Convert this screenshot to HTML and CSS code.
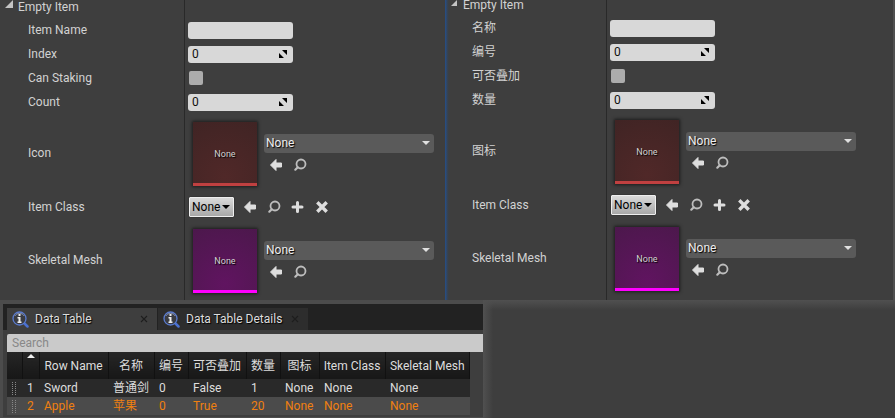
FILE: index.html
```html
<!DOCTYPE html>
<html lang="zh-CN">
<head>
<meta charset="utf-8">
<title>Data Table</title>
<link rel="stylesheet" href="styles.css">
</head>
<body>
<svg class="defs" aria-hidden="true">
  <symbol id="back" viewBox="0 0 16 16"><path d="M2.500 8 8 2.500v3.500h5.500v4H8v3.500z" fill="#dedede" stroke="#dedede" stroke-linejoin="round"/></symbol>
  <symbol id="find" viewBox="0 0 16 16"><circle cx="9" cy="7" r="4.500" fill="none" stroke="#bdbdbd" stroke-width="1.800"/><path d="M5.800 10.200 3.300 12.700" stroke="#bdbdbd" stroke-width="2.200" stroke-linecap="round"/></symbol>
  <symbol id="add" viewBox="0 0 16 16"><path d="M7.500 3.500v9M3 8h9" stroke="#dedede" stroke-width="3" stroke-linecap="round"/></symbol>
  <symbol id="clear" viewBox="0 0 16 16"><path d="m4.500 4.500 7 7m0-7-7 7" stroke="#dedede" stroke-width="3.400" stroke-linecap="square"/></symbol>
  <symbol id="spin" viewBox="0 0 8 8"><path d="M3 0h5v5zM0 3v5h5z" fill="#000"/></symbol>
  <symbol id="caret" viewBox="0 0 8 4"><path d="M0 0h8L4 4z" fill="currentColor"/></symbol>
  <symbol id="open" viewBox="0 0 8 8"><path d="M8 0v8H0z" fill="#c4c4c4"/></symbol>
  <symbol id="cross" viewBox="0 0 8 8"><path d="m1 1 6 6m0-6-6 6" stroke="#1e1e1e" stroke-width="1.100"/></symbol>
  <symbol id="info" viewBox="0 0 17 17">
    <path d="m12 12 3.500 3.500" stroke="#4a70d0" stroke-width="2.500" stroke-linecap="round"/>
    <circle cx="7.500" cy="7.500" r="6.500" fill="#3a3c42" stroke="#5a7bcf" stroke-width="1.300"/>
    <path d="M2.800 5a5.500 5.500 0 0 1 9.400 0" fill="none" stroke="#8792ad"/>
    <path d="M6.500 3h2v2h-2zM5.500 6h3v4.500h1V12h-4v-1.500h1v-3h-1z" fill="#eee"/>
  </symbol>
</svg>

<main class="details">
  <section class="panel panel-en">
    <h2><svg class="open"><use href="#open"/></svg>Empty Item</h2>
    <div class="row"><label for="a-name">Item Name</label><div class="value"><input class="field" id="a-name" type="text"></div></div>
    <div class="row"><label for="a-index">Index</label><div class="value"><span class="spin"><input class="field" id="a-index" type="text" value="0"><svg><use href="#spin"/></svg></span></div></div>
    <div class="row"><label for="a-stack">Can Staking</label><div class="value"><input class="check" id="a-stack" type="checkbox"></div></div>
    <div class="row"><label for="a-count">Count</label><div class="value"><span class="spin"><input class="field" id="a-count" type="text" value="0"><svg><use href="#spin"/></svg></span></div></div>
    <div class="row asset"><label for="a-icon">Icon</label><div class="value">
      <div class="thumb texture">None</div>
      <div class="picker"><span class="combo"><select id="a-icon"><option>None</option></select><svg><use href="#caret"/></svg></span>
        <div class="tools"><button aria-label="Use selected"><svg><use href="#back"/></svg></button><button aria-label="Browse"><svg><use href="#find"/></svg></button></div></div>
    </div></div>
    <div class="row class"><label for="a-class">Item Class</label><div class="value">
      <span class="combo small"><select id="a-class"><option>None</option></select><svg><use href="#caret"/></svg></span>
      <div class="tools"><button aria-label="Use selected"><svg><use href="#back"/></svg></button><button aria-label="Browse"><svg><use href="#find"/></svg></button><button aria-label="Create"><svg><use href="#add"/></svg></button><button aria-label="Clear"><svg><use href="#clear"/></svg></button></div>
    </div></div>
    <div class="row asset"><label for="a-mesh">Skeletal Mesh</label><div class="value">
      <div class="thumb mesh">None</div>
      <div class="picker"><span class="combo"><select id="a-mesh"><option>None</option></select><svg><use href="#caret"/></svg></span>
        <div class="tools"><button aria-label="Use selected"><svg><use href="#back"/></svg></button><button aria-label="Browse"><svg><use href="#find"/></svg></button></div></div>
    </div></div>
  </section>

  <section class="panel panel-zh">
    <h2><svg class="open"><use href="#open"/></svg>Empty Item</h2>
    <div class="row"><label for="b-name">名称</label><div class="value"><input class="field" id="b-name" type="text"></div></div>
    <div class="row"><label for="b-index">编号</label><div class="value"><span class="spin"><input class="field" id="b-index" type="text" value="0"><svg><use href="#spin"/></svg></span></div></div>
    <div class="row"><label for="b-stack">可否叠加</label><div class="value"><input class="check" id="b-stack" type="checkbox"></div></div>
    <div class="row"><label for="b-count">数量</label><div class="value"><span class="spin"><input class="field" id="b-count" type="text" value="0"><svg><use href="#spin"/></svg></span></div></div>
    <div class="row asset"><label for="b-icon">图标</label><div class="value">
      <div class="thumb texture">None</div>
      <div class="picker"><span class="combo"><select id="b-icon"><option>None</option></select><svg><use href="#caret"/></svg></span>
        <div class="tools"><button aria-label="Use selected"><svg><use href="#back"/></svg></button><button aria-label="Browse"><svg><use href="#find"/></svg></button></div></div>
    </div></div>
    <div class="row class"><label for="b-class">Item Class</label><div class="value">
      <span class="combo small"><select id="b-class"><option>None</option></select><svg><use href="#caret"/></svg></span>
      <div class="tools"><button aria-label="Use selected"><svg><use href="#back"/></svg></button><button aria-label="Browse"><svg><use href="#find"/></svg></button><button aria-label="Create"><svg><use href="#add"/></svg></button><button aria-label="Clear"><svg><use href="#clear"/></svg></button></div>
    </div></div>
    <div class="row asset"><label for="b-mesh">Skeletal Mesh</label><div class="value">
      <div class="thumb mesh">None</div>
      <div class="picker"><span class="combo"><select id="b-mesh"><option>None</option></select><svg><use href="#caret"/></svg></span>
        <div class="tools"><button aria-label="Use selected"><svg><use href="#back"/></svg></button><button aria-label="Browse"><svg><use href="#find"/></svg></button></div></div>
    </div></div>
  </section>
</main>

<div class="bottom">
  <section class="data">
    <nav class="tabs">
      <div class="tab active"><svg class="info"><use href="#info"/></svg><span>Data Table</span><button aria-label="Close Data Table"><svg><use href="#cross"/></svg></button></div>
      <div class="tab"><svg class="info"><use href="#info"/></svg><span>Data Table Details</span><button aria-label="Close Data Table Details"><svg><use href="#cross"/></svg></button></div>
    </nav>
    <div class="sheet">
      <input class="search" type="search" placeholder="Search" aria-label="Search">
      <table>
        <colgroup><col class="c-grip"><col class="c-num"><col class="c-row"><col class="c-name"><col class="c-index"><col class="c-stack"><col class="c-count"><col class="c-icon"><col class="c-class"><col class="c-mesh"></colgroup>
        <thead><tr><th></th><th class="sort"><svg viewBox="0 0 8 4"><path d="M0 4h8L4 0z" fill="#eee"/></svg></th><th>Row Name</th><th>名称</th><th>编号</th><th>可否叠加</th><th>数量</th><th>图标</th><th>Item Class</th><th>Skeletal Mesh</th></tr></thead>
        <tbody>
          <tr><td><i class="grip"></i></td><td>1</td><td>Sword</td><td>普通剑</td><td>0</td><td>False</td><td>1</td><td>None</td><td>None</td><td>None</td></tr>
          <tr class="selected"><td><i class="grip"></i></td><td>2</td><td>Apple</td><td>苹果</td><td>0</td><td>True</td><td>20</td><td>None</td><td>None</td><td>None</td></tr>
        </tbody>
      </table>
    </div>
  </section>
  <div class="empty"></div>
</div>
</body>
</html>
```
FILE: styles.css
```css
* { box-sizing: border-box; }

body {
  margin: 0;
  min-height: 100vh;
  display: flex;
  flex-direction: column;
  background: #3e3e3e;
  color: #d2d2d2;
  font: 12px/16px Roboto, "Noto Sans CJK SC", sans-serif;
}

svg { display: block; }
.defs { position: absolute; width: 0; height: 0; }
input, select, button { margin: 0; font: inherit; border: 0; appearance: none; }
button { padding: 0; background: none; }

.details { display: flex; }
.panel { display: flex; flex-direction: column; background: #3e3e3e; }
.panel-en { --label: 185px; --indent: 28px; flex: 89 1 0; }
.panel-zh {
  --label: 162px;
  --indent: 27px;
  flex: 90 1 0;
  box-shadow: inset -2px 0 #505050;
  background: linear-gradient(90deg, #24508c 0, #2c4a75 1px, #3a4047 3px, #3e3e3e 5px);
}

h2 {
  display: flex;
  gap: 5px;
  margin: 0;
  height: 18px;
  padding-left: 5px;
  width: var(--label);
  border-right: 1px solid #292929;
  font-size: 12px;
  font-weight: 400;
  line-height: 14px;
}
.panel-zh h2 { height: 16px; line-height: 10px; }
.open { width: 8px; height: 8px; }
.panel-zh .open { height: 6px; }

.row { display: flex; height: 24px; }
.row.asset { height: 78px; }
.row.class { height: 30px; }
.row label {
  display: flex;
  align-items: center;
  width: var(--label);
  padding-left: var(--indent);
  border-right: 1px solid #292929;
}
.value { display: flex; flex: 1; align-items: center; padding-left: 3px; }

.row:last-child > * { padding-bottom: 2px; }
.panel-zh .row:last-child { height: 80px; }
.panel-zh .row:last-child > * { padding-bottom: 4px; }

.field {
  width: 105px;
  height: 17px;
  padding: 0 4px;
  border-radius: 3px;
  background: #d8d8d8;
  color: #111;
}
.spin, .combo { position: relative; display: block; }
.spin svg { position: absolute; right: 6px; top: 4px; width: 8px; height: 8px; }
.check { width: 14px; height: 14px; margin-left: 1px; border-radius: 2px; background: #acacac; }

.thumb {
  display: grid;
  place-items: center;
  width: 64px;
  height: 64px;
  margin: 2px 7px 0 5px;
  padding-top: 3px;
  font-size: 9px;
  box-shadow: 0 0 3px 1px #1c1c1c;
  text-shadow: 1px 1px 1px #000;
}
.texture { border-bottom: 3px solid #c04040; background: radial-gradient(circle at 50% 90%, #502828, #402424); }
.mesh { border-bottom: 3px solid #ff00ff; background: radial-gradient(circle at 50% 90%, #601460, #4c184c); }

.picker { display: flex; flex-direction: column; gap: 4px; }
.picker .tools { padding-left: 4px; }
.combo { color: #e0e0e0; }
.combo select {
  display: block;
  width: 170px;
  height: 19px;
  padding: 0 2px 1px;
  border-radius: 3px;
  background: #5a5a5a;
  color: #eee;
  text-shadow: 1px 1px 1px #000;
}
.combo svg { position: absolute; right: 4px; top: 7px; width: 8px; height: 4px; pointer-events: none; }
.small { color: #000; margin: 0 8px 0 1px; }
.small select {
  width: 45px;
  height: 20px;
  padding: 0 2px;
  border: 1px solid #eee;
  border-radius: 1px;
  background: linear-gradient(#dadada, #a8a8a8);
  color: #000;
  text-shadow: none;
  box-shadow: 0 0 1px #000;
}
.small svg { top: 8px; }
.tools { display: flex; gap: 8px; }
.tools svg { width: 16px; height: 16px; }

.bottom { display: flex; flex: 1; }
.data {
  flex: 0 0 54%;
  display: flex;
  flex-direction: column;
  border: solid #4c4c4c;
  border-width: 4px 0 1px 3px;
  background: #3e3e3e;
}
.empty { flex: 1; background: linear-gradient(90deg, #505050, transparent 10px), linear-gradient(#505050, #3e3e3e 10px); }

.tabs { display: flex; gap: 1px; padding: 4px 0 0 4px; background: #222; }
.tab {
  display: flex;
  align-items: center;
  width: 150px;
  height: 22px;
  padding: 0 9px 0 5px;
  background: #2d2d2d;
  color: #ddd;
  white-space: nowrap;
  text-shadow: 1px 1px 1px #000;
}
.tab.active { background: #3e3e3e; }
.tab span { flex: 1; padding-left: 6px; }
.info { width: 17px; height: 17px; }
.tab button svg { width: 8px; height: 8px; }

.sheet { padding: 4px 0 0 4px; }
.search {
  display: block;
  width: 100%;
  height: 18px;
  padding: 0 5px;
  border-radius: 2px 0 0 0;
  background: #cacaca;
}
.search::placeholder { color: #888; opacity: 1; }

table { width: 463px; table-layout: fixed; border-collapse: collapse; color: #ddd; }
.c-grip { width: 15px; }
.c-num { width: 17px; }
.c-row { width: 69px; }
.c-name { width: 46px; }
.c-index { width: 34px; }
.c-stack { width: 58px; }
.c-count { width: 34px; }
.c-icon { width: 39px; }
.c-class { width: 66px; }
th, td { padding: 0; white-space: nowrap; font-weight: 400; }
th {
  height: 27px;
  border-right: 1px solid #111;
  background: linear-gradient(#262626, #171717);
  text-align: center;
}
.sort { vertical-align: top; padding-top: 2px; }
.sort svg { width: 8px; height: 4px; margin: 0 auto; }
td { height: 18px; padding-left: 5px; background: #292929; }
.selected td { background: #4b4b4b; color: #f08010; }
.grip {
  display: block;
  width: 5px;
  height: 13px;
  background: repeating-linear-gradient(#888 0 1px, transparent 1px 2px);
  mask: linear-gradient(90deg, #000 1px, transparent 1px 3px, #000 3px 4px, transparent 4px);
}
```
